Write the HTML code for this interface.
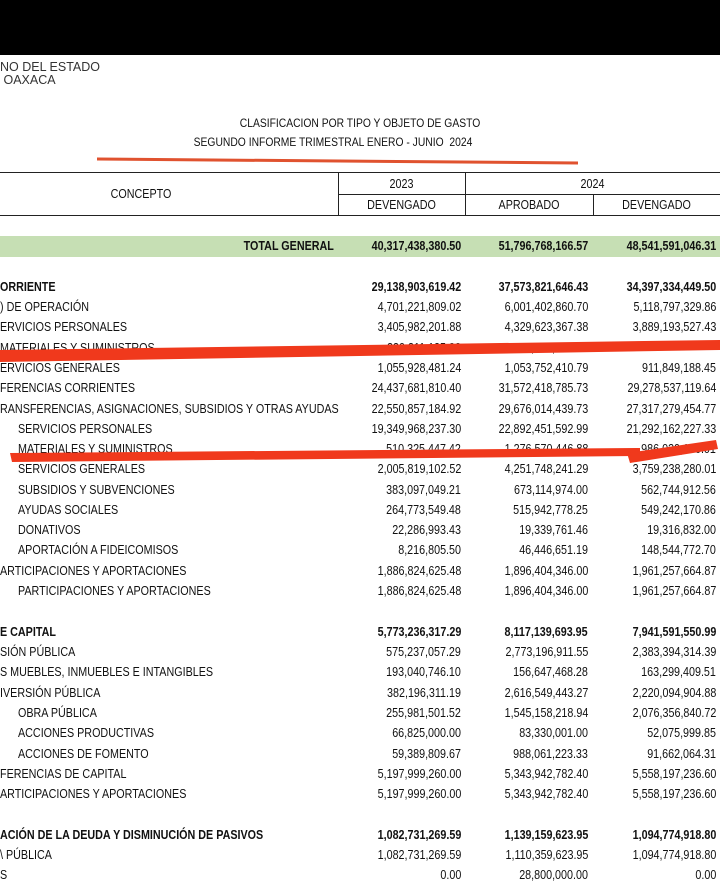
<!DOCTYPE html>
<html><head><meta charset="utf-8"><style>
body{margin:0;width:720px;height:892px;background:#fff;position:relative;overflow:hidden;font-family:"Liberation Sans",Arial,sans-serif;color:#111}
.t{position:absolute;font-size:12.5px;line-height:16px;white-space:nowrap}
.l{transform:scaleX(.86);transform-origin:left center}
.r{transform:scaleX(.86);transform-origin:right center;text-align:right}
.b{font-weight:bold}
.hl{position:absolute;background:#222;height:1px}
.vl{position:absolute;background:#222;width:1px}
</style></head><body>
<div style="position:absolute;left:0;top:0;width:720px;height:55px;background:#000"></div>
<div class="t" style="left:0;top:61px;font-size:12.5px;line-height:13px;color:#333">NO DEL ESTADO<br>&nbsp;OAXACA</div>
<div class="t" style="left:0;width:720px;top:115px;text-align:center;transform:scaleX(.86);font-size:12px">CLASIFICACION POR TIPO Y OBJETO DE GASTO</div>
<div class="t" style="left:0;width:666px;top:134px;text-align:center;transform:scaleX(.86);font-size:12px">SEGUNDO INFORME TRIMESTRAL ENERO - JUNIO&nbsp; 2024</div>

<div class="hl" style="left:0;top:172px;width:720px"></div>
<div class="hl" style="left:338px;top:194px;width:382px"></div>
<div class="hl" style="left:0;top:215px;width:720px"></div>
<div class="vl" style="left:338px;top:172px;height:43px"></div>
<div class="vl" style="left:465px;top:172px;height:43px"></div>
<div class="vl" style="left:593px;top:194px;height:21px"></div>
<div class="t" style="left:0;width:282px;top:186px;text-align:center;transform:scaleX(.86)">CONCEPTO</div>
<div class="t" style="left:338px;width:127px;top:176px;text-align:center;transform:scaleX(.86)">2023</div>
<div class="t" style="left:465px;width:255px;top:176px;text-align:center;transform:scaleX(.86)">2024</div>
<div class="t" style="left:338px;width:127px;top:197px;text-align:center;transform:scaleX(.86)">DEVENGADO</div>
<div class="t" style="left:465px;width:128px;top:197px;text-align:center;transform:scaleX(.86)">APROBADO</div>
<div class="t" style="left:593px;width:127px;top:197px;text-align:center;transform:scaleX(.86)">DEVENGADO</div>

<div style="position:absolute;left:0;top:236px;width:720px;height:21px;background:#c6dfb4"></div>

<div class="t r b" style="right:386px;top:238px">TOTAL GENERAL</div>
<div class="t r b" style="right:259px;top:238px">40,317,438,380.50</div>
<div class="t r b" style="right:132px;top:238px">51,796,768,166.57</div>
<div class="t r b" style="right:4px;top:238px">48,541,591,046.31</div>

<div class="t l b" style="left:0;top:279px">ORRIENTE</div><div class="t r b" style="right:259px;top:279px">29,138,903,619.42</div><div class="t r b" style="right:132px;top:279px">37,573,821,646.43</div><div class="t r b" style="right:4px;top:279px">34,397,334,449.50</div>
<div class="t l" style="left:0;top:299px">) DE OPERACIÓN</div><div class="t r" style="right:259px;top:299px">4,701,221,809.02</div><div class="t r" style="right:132px;top:299px">6,001,402,860.70</div><div class="t r" style="right:4px;top:299px">5,118,797,329.86</div>
<div class="t l" style="left:0;top:319px">ERVICIOS PERSONALES</div><div class="t r" style="right:259px;top:319px">3,405,982,201.88</div><div class="t r" style="right:132px;top:319px">4,329,623,367.38</div><div class="t r" style="right:4px;top:319px">3,889,193,527.43</div>
<div class="t l" style="left:0;top:340px">MATERIALES Y SUMINISTROS</div><div class="t r" style="right:259px;top:340px">230,311,125.90</div><div class="t r" style="right:132px;top:340px">618,027,082.53</div>
<div class="t l" style="left:0;top:360px">ERVICIOS GENERALES</div><div class="t r" style="right:259px;top:360px">1,055,928,481.24</div><div class="t r" style="right:132px;top:360px">1,053,752,410.79</div><div class="t r" style="right:4px;top:360px">911,849,188.45</div>
<div class="t l" style="left:0;top:380px">FERENCIAS CORRIENTES</div><div class="t r" style="right:259px;top:380px">24,437,681,810.40</div><div class="t r" style="right:132px;top:380px">31,572,418,785.73</div><div class="t r" style="right:4px;top:380px">29,278,537,119.64</div>
<div class="t l" style="left:0;top:401px">RANSFERENCIAS, ASIGNACIONES, SUBSIDIOS Y OTRAS AYUDAS</div><div class="t r" style="right:259px;top:401px">22,550,857,184.92</div><div class="t r" style="right:132px;top:401px">29,676,014,439.73</div><div class="t r" style="right:4px;top:401px">27,317,279,454.77</div>
<div class="t l" style="left:18px;top:421px">SERVICIOS PERSONALES</div><div class="t r" style="right:259px;top:421px">19,349,968,237.30</div><div class="t r" style="right:132px;top:421px">22,892,451,592.99</div><div class="t r" style="right:4px;top:421px">21,292,162,227.33</div>
<div class="t l" style="left:18px;top:441px">MATERIALES Y SUMINISTROS</div><div class="t r" style="right:259px;top:441px">510,325,447.42</div><div class="t r" style="right:132px;top:441px">1,276,570,446.88</div><div class="t r" style="right:4px;top:441px">986,030,150.01</div>
<div class="t l" style="left:18px;top:461px">SERVICIOS GENERALES</div><div class="t r" style="right:259px;top:461px">2,005,819,102.52</div><div class="t r" style="right:132px;top:461px">4,251,748,241.29</div><div class="t r" style="right:4px;top:461px">3,759,238,280.01</div>
<div class="t l" style="left:18px;top:482px">SUBSIDIOS Y SUBVENCIONES</div><div class="t r" style="right:259px;top:482px">383,097,049.21</div><div class="t r" style="right:132px;top:482px">673,114,974.00</div><div class="t r" style="right:4px;top:482px">562,744,912.56</div>
<div class="t l" style="left:18px;top:502px">AYUDAS SOCIALES</div><div class="t r" style="right:259px;top:502px">264,773,549.48</div><div class="t r" style="right:132px;top:502px">515,942,778.25</div><div class="t r" style="right:4px;top:502px">549,242,170.86</div>
<div class="t l" style="left:18px;top:522px">DONATIVOS</div><div class="t r" style="right:259px;top:522px">22,286,993.43</div><div class="t r" style="right:132px;top:522px">19,339,761.46</div><div class="t r" style="right:4px;top:522px">19,316,832.00</div>
<div class="t l" style="left:18px;top:542px">APORTACIÓN A FIDEICOMISOS</div><div class="t r" style="right:259px;top:542px">8,216,805.50</div><div class="t r" style="right:132px;top:542px">46,446,651.19</div><div class="t r" style="right:4px;top:542px">148,544,772.70</div>
<div class="t l" style="left:0;top:563px">ARTICIPACIONES Y APORTACIONES</div><div class="t r" style="right:259px;top:563px">1,886,824,625.48</div><div class="t r" style="right:132px;top:563px">1,896,404,346.00</div><div class="t r" style="right:4px;top:563px">1,961,257,664.87</div>
<div class="t l" style="left:18px;top:583px">PARTICIPACIONES Y APORTACIONES</div><div class="t r" style="right:259px;top:583px">1,886,824,625.48</div><div class="t r" style="right:132px;top:583px">1,896,404,346.00</div><div class="t r" style="right:4px;top:583px">1,961,257,664.87</div>

<div class="t l b" style="left:0;top:624px">E CAPITAL</div><div class="t r b" style="right:259px;top:624px">5,773,236,317.29</div><div class="t r b" style="right:132px;top:624px">8,117,139,693.95</div><div class="t r b" style="right:4px;top:624px">7,941,591,550.99</div>
<div class="t l" style="left:0;top:644px">SIÓN PÚBLICA</div><div class="t r" style="right:259px;top:644px">575,237,057.29</div><div class="t r" style="right:132px;top:644px">2,773,196,911.55</div><div class="t r" style="right:4px;top:644px">2,383,394,314.39</div>
<div class="t l" style="left:0;top:664px">S MUEBLES, INMUEBLES E INTANGIBLES</div><div class="t r" style="right:259px;top:664px">193,040,746.10</div><div class="t r" style="right:132px;top:664px">156,647,468.28</div><div class="t r" style="right:4px;top:664px">163,299,409.51</div>
<div class="t l" style="left:0;top:685px">IVERSIÓN PÚBLICA</div><div class="t r" style="right:259px;top:685px">382,196,311.19</div><div class="t r" style="right:132px;top:685px">2,616,549,443.27</div><div class="t r" style="right:4px;top:685px">2,220,094,904.88</div>
<div class="t l" style="left:18px;top:705px">OBRA PÚBLICA</div><div class="t r" style="right:259px;top:705px">255,981,501.52</div><div class="t r" style="right:132px;top:705px">1,545,158,218.94</div><div class="t r" style="right:4px;top:705px">2,076,356,840.72</div>
<div class="t l" style="left:18px;top:725px">ACCIONES PRODUCTIVAS</div><div class="t r" style="right:259px;top:725px">66,825,000.00</div><div class="t r" style="right:132px;top:725px">83,330,001.00</div><div class="t r" style="right:4px;top:725px">52,075,999.85</div>
<div class="t l" style="left:18px;top:746px">ACCIONES DE FOMENTO</div><div class="t r" style="right:259px;top:746px">59,389,809.67</div><div class="t r" style="right:132px;top:746px">988,061,223.33</div><div class="t r" style="right:4px;top:746px">91,662,064.31</div>
<div class="t l" style="left:0;top:766px">FERENCIAS DE CAPITAL</div><div class="t r" style="right:259px;top:766px">5,197,999,260.00</div><div class="t r" style="right:132px;top:766px">5,343,942,782.40</div><div class="t r" style="right:4px;top:766px">5,558,197,236.60</div>
<div class="t l" style="left:0;top:786px">ARTICIPACIONES Y APORTACIONES</div><div class="t r" style="right:259px;top:786px">5,197,999,260.00</div><div class="t r" style="right:132px;top:786px">5,343,942,782.40</div><div class="t r" style="right:4px;top:786px">5,558,197,236.60</div>

<div class="t l b" style="left:0;top:827px">ACIÓN DE LA DEUDA Y DISMINUCIÓN DE PASIVOS</div><div class="t r b" style="right:259px;top:827px">1,082,731,269.59</div><div class="t r b" style="right:132px;top:827px">1,139,159,623.95</div><div class="t r b" style="right:4px;top:827px">1,094,774,918.80</div>
<div class="t l" style="left:0;top:847px">\ PÚBLICA</div><div class="t r" style="right:259px;top:847px">1,082,731,269.59</div><div class="t r" style="right:132px;top:847px">1,110,359,623.95</div><div class="t r" style="right:4px;top:847px">1,094,774,918.80</div>
<div class="t l" style="left:0;top:867px">S</div><div class="t r" style="right:259px;top:867px">0.00</div><div class="t r" style="right:132px;top:867px">28,800,000.00</div><div class="t r" style="right:4px;top:867px">0.00</div>

<svg style="position:absolute;left:0;top:0" width="720" height="892">
<line x1="97" y1="159" x2="578" y2="163" stroke="#e0522f" stroke-width="3"/>
<polygon points="0,350 720,340 720,350 0,362" fill="#f0391c"/>
<polygon points="10,453 640,448 640,456 12,462" fill="#f0391c"/>
<polygon points="627,453 716,440 718,449 630,463" fill="#f0391c"/>
</svg>
</body></html>
